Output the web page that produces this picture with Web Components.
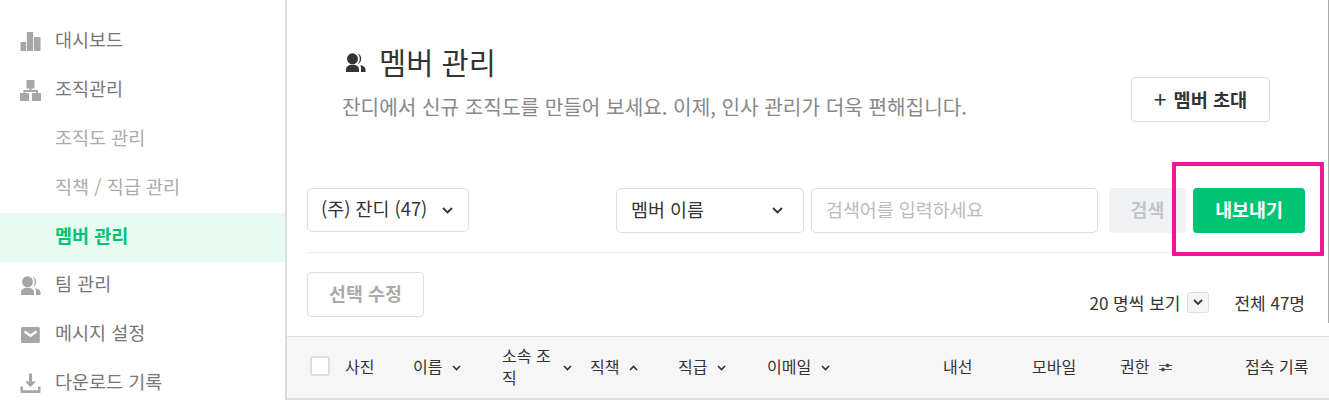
<!DOCTYPE html>
<html lang="ko">
<head>
<meta charset="utf-8">
<title>멤버 관리</title>
<style>
  html, body { margin: 0; height: 400px; overflow: hidden; background: #fff; }
  body { font-family: "Noto Sans CJK KR", "Noto Sans", sans-serif; color: #333; }
</style>
</head>
<body>
<app-shell>
  <side-nav slot="side">
    <nav-item icon="chart">대시보드</nav-item>
    <nav-item icon="org">조직관리</nav-item>
    <nav-item sub>조직도 관리</nav-item>
    <nav-item sub>직책 / 직급 관리</nav-item>
    <nav-item sub active>멤버 관리</nav-item>
    <nav-item icon="people">팀 관리</nav-item>
    <nav-item icon="mail">메시지 설정</nav-item>
    <nav-item icon="download">다운로드 기록</nav-item>
  </side-nav>
  <page-header></page-header>
  <search-bar></search-bar>
  <list-actions></list-actions>
  <table-head></table-head>
</app-shell>

<script>
// all icons sit in a 21x21 box
const ICONS = {
  chart: '<path d="M0.500 11h5.500v9H0.500zM6.800 1h6.400v19H6.800zM14 6h6.500v14H14z"/>',
  org: '<path d="M6.500 0h8v8.500h-3V10h6.500v3H21v8h-9v-8h4v-1H5v1h4v8H0v-8h3.500v-3H9.500V8.500h-3z"/>',
  people: '<circle cx="7.500" cy="6.800" r="5.500"/><path d="M1 20v-2.500c0-3 2.500-4.700 6.500-4.700s6.500 1.700 6.500 4.700V20z"/><path d="M12.500 1.600a5.500 5.500 0 0 1 0 10.400 7 7 0 0 0 0-10.400zM15.500 13c3 .8 5 2.200 5 4.500V20h-4.500v-3c0-1.500-.2-2.800-.5-4z"/>',
  mail: '<path d="M2.500 3h15A1.500 1.500 0 0 1 19.800 4.500v13a1.500 1.500 0 0 1-1.500 1.500H2.500A1.500 1.500 0 0 1 1 17.500v-13A1.500 1.500 0 0 1 2.500 3z"/><path d="M4.500 7.500l6 4.300 6-4.300" fill="none" stroke="#fff" stroke-width="2.400"/>',
  download: '<path d="M9 .5h3v8h4l-5.500 5.500L5 8.500h4z"/><path d="M.5 13.500h2.500v3.800h15v-3.800h2.500v5.700a.8.800 0 0 1-.8.800H1.300a.8.800 0 0 1-.8-.8z"/>'
};

class AppShell extends HTMLElement {
  constructor() {
    super();
    this.attachShadow({ mode: 'open' });
    this.shadowRoot.innerHTML = `
      <style>
        :host { display: grid; grid-template-columns: 285px 1fr; width: 1329px; height: 400px; position: relative; }
        main { border-left: 2px solid #ddd; min-width: 0; }
        .mark { position: absolute; left: 1172px; top: 162px; width: 144px; height: 86px; border: 4px solid #f0149b; border-radius: 1px; }
        .edge { position: absolute; right: 0; top: 0; width: 1px; height: 323px; background: #aaa; }
      </style>
      <slot name="side"></slot>
      <main><slot></slot></main>
      <div class="edge"></div>
      <div class="mark"></div>`;
  }
}

class SideNav extends HTMLElement {
  constructor() {
    super();
    this.attachShadow({ mode: 'open' });
    this.shadowRoot.innerHTML = `
      <style>
        :host { display: flex; flex-direction: column; padding-top: 18px; }
      </style>
      <slot></slot>`;
  }
}

class NavItem extends HTMLElement {
  constructor() {
    super();
    this.attachShadow({ mode: 'open' });
  }
  connectedCallback() {
    const icon = ICONS[this.getAttribute('icon')];
    this.shadowRoot.innerHTML = `
      <style>
        :host { display: flex; align-items: center; box-sizing: border-box; height: 48.800px; padding: 0 0 6px 20px; gap: 14px; font-size: 18.500px; color: #777; }
        :host([sub]) { padding-left: 55px; color: #aaa; }
        :host([active]) { background: #e6fbf2; color: #00c473; font-weight: 700; }
        svg { width: 21px; height: 21px; fill: #a6a6a6; flex: none; margin-top: 5px; }
      </style>
      ${icon ? `<svg viewBox="0 0 21 21">${icon}</svg>` : ''}
      <slot></slot>`;
  }
}

class PageHeader extends HTMLElement {
  constructor() {
    super();
    this.attachShadow({ mode: 'open' });
    this.shadowRoot.innerHTML = `
      <style>
        :host { display: flex; justify-content: space-between; align-items: flex-end; height: 122px; padding: 0 59px 0 55px; box-sizing: border-box; }
        .text { padding-bottom: 1px; }
        h1 { display: flex; align-items: center; gap: 13px; margin: 0 0 0 3px; font-size: 29.500px; font-weight: 400; color: #333; line-height: 40px; }
        h1 svg { width: 21px; height: 21px; fill: #333; margin-top: 3px; }
        p { margin: 12px 0 0; font-size: 20.200px; line-height: 28px; color: #888; }
        .invite { width: 139px; height: 45px; box-sizing: border-box; padding-bottom: 2px; border: 1px solid #ddd; border-radius: 4px; background: #fff; color: #333; font: 700 18.600px "Noto Sans CJK KR", sans-serif; display: flex; align-items: center; justify-content: center; gap: 7px; }
        .plus { font-weight: 400; font-size: 23px; line-height: 1; }
      </style>
      <div class="text">
        <h1><svg viewBox="0 0 21 21">${ICONS.people}</svg>멤버 관리</h1>
        <p>잔디에서 신규 조직도를 만들어 보세요. 이제, 인사 관리가 더욱 편해집니다.</p>
      </div>
      <div class="invite"><span class="plus">+</span>멤버 초대</div>`;
  }
}

class SearchBar extends HTMLElement {
  constructor() {
    super();
    this.attachShadow({ mode: 'open' });
    this.shadowRoot.innerHTML = `
      <style>
        :host { display: flex; align-items: flex-start; margin: 66px 23px 0 20px; padding-bottom: 19px; border-bottom: 1px solid #eee; font-size: 18.400px; }
        .box { box-sizing: border-box; height: 45px; padding-bottom: 4px; border: 1px solid #ddd; border-radius: 5px; display: flex; align-items: center; background: #fff; color: #333; }
        .org { width: 162px; padding-left: 13px; padding-right: 15px; justify-content: space-between; height: 44px; margin-right: 147px; }
        .kind { width: 188px; padding-left: 14px; padding-right: 20px; justify-content: space-between; margin-right: 7px; }
        .query { width: 287px; padding-left: 14px; color: #bbb; margin-right: 11px; }
        .btn { box-sizing: border-box; height: 45px; padding-bottom: 4px; border-radius: 4px; font-weight: 700; display: flex; align-items: center; justify-content: center; }
        .search { width: 77px; background: #f1f2f6; color: #c4c4c4; margin-right: 7px; }
        .export { width: 112px; background: #00c473; color: #fff; }
        svg { width: 11px; height: 7px; fill: none; stroke: #333; stroke-width: 1.800; margin-top: 4px; }
      </style>
      <div class="box org">(주) 잔디 (47)<svg viewBox="0 0 11 7"><path d="M1 1l4.500 4.500L10 1"/></svg></div>
      <div class="box kind">멤버 이름<svg viewBox="0 0 11 7"><path d="M1 1l4.500 4.500L10 1"/></svg></div>
      <div class="box query">검색어를 입력하세요</div>
      <div class="btn search">검색</div>
      <div class="btn export">내보내기</div>`;
  }
}

class ListActions extends HTMLElement {
  constructor() {
    super();
    this.attachShadow({ mode: 'open' });
    this.shadowRoot.innerHTML = `
      <style>
        :host { display: flex; justify-content: space-between; align-items: flex-start; margin: 19px 24px 19px 20px; height: 45px; font-size: 17px; color: #333; }
        .edit { width: 117px; height: 45px; box-sizing: border-box; padding-bottom: 4px; border: 1px solid #ddd; border-radius: 4px; color: #aaa; font-weight: 700; font-size: 18.400px; display: flex; align-items: center; justify-content: center; }
        .right { display: flex; align-items: center; margin-top: 19px; height: 22px; }
        .pick { width: 22px; height: 21px; box-sizing: border-box; border: 1px solid #ddd; border-radius: 3px; background: #f5f5f5; display: flex; align-items: center; justify-content: center; margin: 0 25px 0 7px; }
        svg { width: 10px; height: 6px; fill: none; stroke: #333; stroke-width: 1.800; }
      </style>
      <div class="edit">선택 수정</div>
      <div class="right">20 명씩 보기<span class="pick"><svg viewBox="0 0 10 6"><path d="M1 1l4 4 4-4"/></svg></span>전체 47명</div>`;
  }
}

class TableHead extends HTMLElement {
  constructor() {
    super();
    this.attachShadow({ mode: 'open' });
    const down = '<svg class="c" viewBox="0 0 9 6"><path d="M1 1l3.500 3.500L8 1"/></svg>';
    const up = '<svg class="c" viewBox="0 0 9 6"><path d="M1 5l3.500-3.500L8 5"/></svg>';
    const sliders = '<svg class="s" viewBox="0 0 13 9"><path d="M0 2.500h13M0 6.500h13"/><circle cx="8.500" cy="2.500" r="1.500"/><circle cx="4" cy="6.500" r="1.500"/></svg>';
    this.shadowRoot.innerHTML = `
      <style>
        :host { display: grid; grid-template-columns: 35px 68px 89px 88px 88px 89px 176px 89px 88px 125px 1fr; align-items: center; height: 58px; padding: 0 0 3px 23px; background: #f6f6f6; border-top: 1px solid #ddd; border-bottom: 2px solid #ddd; font-size: 16px; line-height: 22px; color: #333; box-sizing: content-box; white-space: nowrap; }
        .box { width: 20px; height: 20px; box-sizing: border-box; border: 2px solid #ddd; border-radius: 3px; background: #fff; }
        .col { display: flex; align-items: center; gap: 10px; }
        .wrap { white-space: normal; width: 51px; word-break: break-all; }
        .c { width: 9px; height: 6px; fill: none; stroke: #333; stroke-width: 1.600; flex: none; margin-top: 3px; }
        .s { width: 13px; height: 9px; stroke: #555; stroke-width: 1; fill: #333; flex: none; margin-top: 3px; }
      </style>
      <div class="box"></div>
      <div>사진</div>
      <div class="col">이름${down}</div>
      <div class="col"><span class="wrap">소속 조직</span>${down}</div>
      <div class="col">직책${up}</div>
      <div class="col">직급${down}</div>
      <div class="col">이메일${down}</div>
      <div>내선</div>
      <div>모바일</div>
      <div class="col">권한${sliders}</div>
      <div>접속 기록</div>`;
  }
}

customElements.define('app-shell', AppShell);
customElements.define('side-nav', SideNav);
customElements.define('nav-item', NavItem);
customElements.define('page-header', PageHeader);
customElements.define('search-bar', SearchBar);
customElements.define('list-actions', ListActions);
customElements.define('table-head', TableHead);
</script>
</body>
</html>
